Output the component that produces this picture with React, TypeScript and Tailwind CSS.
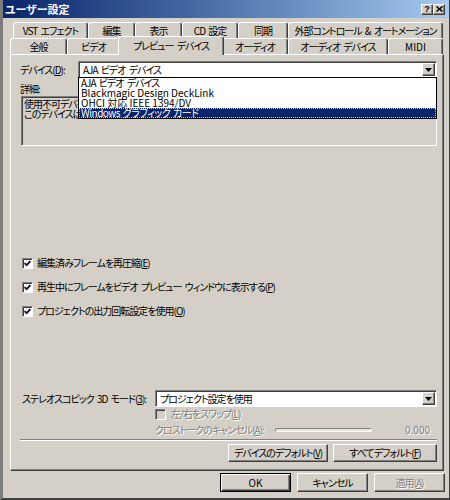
import React from 'react';

const ui = "font-['Noto_Sans_CJK_JP','Noto_Sans_CJK_SC',sans-serif] [font-feature-settings:'palt'] text-[10px] leading-[12px] tracking-[-1px] [word-spacing:2px] text-black";
const latin = 'tracking-normal [word-spacing:normal]';
const raised = 'border border-t-white border-l-white border-r-[#404040] border-b-[#404040] shadow-[inset_-1px_-1px_0_#808080] bg-[#d4d0c8]';
const sunken = 'border border-t-[#808080] border-l-[#808080] border-r-white border-b-white shadow-[inset_1px_1px_0_#404040]';
const disabledText = 'text-[#808080] [text-shadow:1px_1px_0_#ffffff]';

function Acc({ k }: { k: string }) {
  return <span className="underline underline-offset-[1px]">{k}</span>;
}

function Check({ checked, disabled }: { checked?: boolean; disabled?: boolean }) {
  return (
    <span
      className={`w-[11px] h-[11px] shrink-0 flex items-center justify-center ${sunken} ${
        disabled ? 'bg-[#d4d0c8]' : 'bg-white'
      }`}
    >
      {checked && (
        <svg width="7" height="7" viewBox="0 0 7 7">
          <path d="M0.6 3.2 L2.6 5.2 L6.4 1.2" stroke="#000" strokeWidth="1.7" fill="none" />
        </svg>
      )}
    </span>
  );
}

function Arrow() {
  return (
    <span className={`w-[13px] h-[13px] shrink-0 flex items-center justify-center ${raised}`}>
      <svg width="7" height="4" viewBox="0 0 7 4">
        <path d="M0 0 H7 L3.5 4 Z" fill="#000" />
      </svg>
    </span>
  );
}

function Combo({ value, children }: { value: string; children?: React.ReactNode }) {
  return (
    <div className={`relative flex-1 h-[17px] p-px bg-white flex items-center ${sunken}`}>
      <span className="flex-1 pl-[3px] whitespace-nowrap">{value}</span>
      <Arrow />
      {children}
    </div>
  );
}

function BackTab({ label, w, isLatin }: { label: string; w: string; isLatin?: boolean }) {
  return (
    <div
      className={`${w} h-[16px] flex items-center justify-center border-t border-l border-r border-t-white border-l-white border-r-[#404040] shadow-[inset_-1px_0_0_#808080] rounded-t-[3px] whitespace-nowrap ${
        isLatin ? latin : ''
      }`}
    >
      {label}
    </div>
  );
}

function Button({ w, children, isDefault }: { w: string; children: React.ReactNode; isDefault?: boolean }) {
  return (
    <div
      className={`${w} h-full flex items-center justify-center whitespace-nowrap ${
        isDefault
          ? 'border border-black bg-[#d4d0c8] shadow-[inset_1px_1px_0_#fff,inset_-1px_-1px_0_#404040,inset_-2px_-2px_0_#808080]'
          : raised
      }`}
    >
      {children}
    </div>
  );
}

export default function App() {
  return (
    <div
      className={`w-[450px] h-[500px] overflow-hidden bg-[#d4d0c8] flex flex-col border-l-[3px] border-l-[#7c7c7c] border-r border-r-[#404040] border-b-2 border-b-[#404040] ${ui}`}
    >
      {/* Title bar */}
      <div className="h-[18px] shrink-0 flex items-center bg-gradient-to-r from-[#0a246a] to-[#a6caf0] pl-[2px] pr-[4px]">
        <span className="flex-1 text-white font-bold text-[11px] tracking-normal">ユーザー設定</span>
        <div className="flex">
          <span className={`w-[12px] h-[11px] flex items-center justify-center ${raised}`}>
            <span className="font-['Liberation_Sans',sans-serif] font-bold text-[9px] leading-[9px] tracking-normal">?</span>
          </span>
          <span className={`w-[12px] h-[11px] flex items-center justify-center ${raised}`}>
            <svg width="7" height="6" viewBox="0 0 7 6">
              <path d="M0.5 0.5 L6.5 5.5 M6.5 0.5 L0.5 5.5" stroke="#000" strokeWidth="1.5" />
            </svg>
          </span>
        </div>
      </div>

      {/* Body */}
      <div className="flex-1 flex flex-col pl-[7px] pr-[5px]">
        {/* Tabs */}
        <div className="mt-[4px] flex pl-[3px]">
          <BackTab label="VST エフェクト" w="w-[75px]" />
          <BackTab label="編集" w="w-[47px]" />
          <BackTab label="表示" w="w-[47px]" />
          <BackTab label="CD 設定" w="w-[56px]" />
          <BackTab label="同期" w="w-[50px]" />
          <BackTab label="外部コントロール & オートメーション" w="w-[155px]" />
        </div>
        <div className="flex items-end h-[16px]">
          <BackTab label="全般" w="w-[57px]" />
          <BackTab label="ビデオ" w="w-[53px]" />
          <div className="relative z-10 w-[106px] h-[19px] -mx-[2px] -mb-px bg-[#d4d0c8] flex items-center justify-center border-t border-l border-r border-t-white border-l-white border-r-[#404040] shadow-[inset_-1px_0_0_#808080] rounded-t-[3px] whitespace-nowrap">
            プレビュー デバイス
          </div>
          <BackTab label="オーディオ" w="w-[66px]" />
          <BackTab label="オーディオ デバイス" w="w-[100px]" />
          <BackTab label="MIDI" w="w-[55px]" isLatin />
        </div>

        {/* Tab panel */}
        <div className="h-[417px] shrink-0 flex flex-col pl-[9px] pr-[6px] pt-[6px] border border-t-white border-l-white border-r-[#404040] border-b-[#404040] shadow-[inset_-1px_-1px_0_#808080]">
          <div className="relative z-20 flex items-center h-[17px]">
            <span className="w-[58px] shrink-0 whitespace-nowrap">
              デバイス(<Acc k="D" />):
            </span>
            <Combo value="AJA ビデオ デバイス">
              {/* Open drop-down list */}
              <div className="absolute left-[-1px] right-[-1px] top-full border border-black bg-white flex flex-col">
                <div className="h-[10px] leading-[10px] pl-[2px] whitespace-nowrap">AJA ビデオ デバイス</div>
                <div className={`h-[10px] leading-[10px] pl-[2px] whitespace-nowrap ${latin}`}>
                  Blackmagic Design DeckLink
                </div>
                <div className={`h-[10px] leading-[10px] pl-[2px] whitespace-nowrap ${latin}`}>
                  OHCI 対応 IEEE 1394/DV
                </div>
                <div className="h-[10px] leading-[10px] pl-[2px] whitespace-nowrap tracking-[-0.5px] [word-spacing:1px] bg-[#0a246a] text-white outline-1 outline-dotted outline-[#c8c8c8] -outline-offset-1">
                  Windows グラフィック カード
                </div>
              </div>
            </Combo>
          </div>

          <div className="mt-[5px] h-[12px]">詳細:</div>
          <div className={`mt-[1px] ml-[1px] h-[50px] p-px overflow-hidden ${sunken}`}>
            <div className="pl-[1px] pt-px leading-[10px] whitespace-nowrap">
              <div>使用不可デバイス</div>
              <div>このデバイスは使用できません。</div>
            </div>
          </div>

          <div className="mt-[105px] flex flex-col">
            <label className="h-[24px] flex items-center gap-[4px] pl-[2px] whitespace-nowrap">
              <Check checked />
              <span>
                編集済みフレームを再圧縮(<Acc k="E" />)
              </span>
            </label>
            <label className="h-[24px] flex items-center gap-[4px] pl-[2px] whitespace-nowrap">
              <Check checked />
              <span>
                再生中にフレームをビデオ プレビュー ウィンドウに表示する(<Acc k="P" />)
              </span>
            </label>
            <label className="h-[24px] flex items-center gap-[4px] pl-[2px] whitespace-nowrap">
              <Check checked />
              <span>
                プロジェクトの出力回転設定を使用(<Acc k="O" />)
              </span>
            </label>
          </div>

          <div className="mt-[67px] flex items-center h-[17px]">
            <span className="w-[135px] shrink-0 pl-[2px] whitespace-nowrap">
              ステレオスコピック 3D モード(<Acc k="3" />):
            </span>
            <Combo value="プロジェクト設定を使用" />
          </div>
          <div className="mt-[1px] h-[12px] flex items-center gap-[5px] pl-[135px] whitespace-nowrap">
            <Check disabled />
            <span className={disabledText}>
              左/右をスワップ(<Acc k="L" />)
            </span>
          </div>
          <div className="mt-[4px] h-[12px] flex items-center pl-[135px]">
            <span className={`w-[120px] shrink-0 whitespace-nowrap ${disabledText}`}>
              クロストークのキャンセル(<Acc k="A" />):
            </span>
            <div className="w-[97px] h-[4px] rounded-[2px] border border-t-[#808080] border-l-[#808080] border-r-white border-b-white bg-[#e8e6e0]" />
            <span className={`flex-1 text-right pr-[7px] ${latin} ${disabledText}`}>0.000</span>
          </div>

          <div className="mt-[3px] h-[2px] border-t border-t-[#808080] border-b border-b-white" />

          <div className="mt-[3px] h-[18px] flex justify-end gap-[5px]">
            <Button w="w-[100px]">
              <span>
                デバイスのデフォルト(<Acc k="V" />)
              </span>
            </Button>
            <Button w="w-[104px]">
              <span>
                すべてデフォルト(<Acc k="F" />)
              </span>
            </Button>
          </div>
        </div>

        {/* Dialog buttons */}
        <div className="mt-[2px] h-[19px] flex justify-end gap-[6px] -mr-px">
          <Button w="w-[71px]" isDefault>
            <span className={latin}>OK</span>
          </Button>
          <Button w="w-[71px]">キャンセル</Button>
          <Button w="w-[71px]">
            <span className={disabledText}>
              適用(<Acc k="A" />)
            </span>
          </Button>
        </div>
      </div>
    </div>
  );
}
